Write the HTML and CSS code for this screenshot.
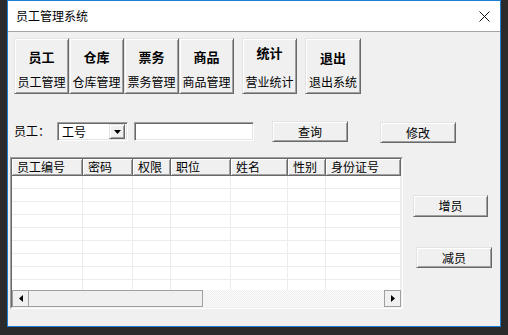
FILE: index.html
```html
<!DOCTYPE html>
<html lang="zh-CN">
<head>
<meta charset="utf-8">
<title>员工管理系统</title>
<link rel="stylesheet" href="styles.css">
</head>
<body>
<div class="window">
  <div class="titlebar">
    <span class="title">员工管理系统</span>
    <svg class="close" width="11" height="11" viewBox="0 0 11 11"><path d="M0.5 0.5L10.5 10.5M10.5 0.5L0.5 10.5" stroke="#111" stroke-width="1"/></svg>
  </div>
  <div class="client">
    <div class="toolbar">
      <div class="tgroup">
        <div class="tbtn"><div class="big">员工</div><div class="small">员工管理</div></div>
        <div class="tbtn"><div class="big">仓库</div><div class="small">仓库管理</div></div>
        <div class="tbtn"><div class="big">票务</div><div class="small">票务管理</div></div>
        <div class="tbtn"><div class="big">商品</div><div class="small">商品管理</div></div>
      </div>
      <div class="tbtn tbtn-stat"><div class="big">统计</div><div class="small">营业统计</div></div>
      <div class="tbtn tbtn-exit"><div class="big">退出</div><div class="small">退出系统</div></div>
    </div>

    <div class="search">
      <span class="label">员工：</span>
      <div class="combo">
        <span class="combo-text">工号</span>
        <span class="combo-btn"><svg width="7" height="4" viewBox="0 0 7 4"><path d="M0 0H7L3.5 4Z" fill="#000"/></svg></span>
      </div>
      <div class="textbox"></div>
      <div class="btn btn-query">查询</div>
      <div class="btn btn-edit">修改</div>
    </div>

    <div class="main">
      <div class="grid">
        <div class="grid-inner">
          <div class="head">
            <div class="hc c1">员工编号</div>
            <div class="hc c2">密码</div>
            <div class="hc c3">权限</div>
            <div class="hc c4">职位</div>
            <div class="hc c5">姓名</div>
            <div class="hc c6">性别</div>
            <div class="hc c7">身份证号</div>
          </div>
          <div class="rows">
            <div class="row"><div class="dc c1"></div><div class="dc c2"></div><div class="dc c3"></div><div class="dc c4"></div><div class="dc c5"></div><div class="dc c6"></div><div class="dc c7"></div></div>
            <div class="row"><div class="dc c1"></div><div class="dc c2"></div><div class="dc c3"></div><div class="dc c4"></div><div class="dc c5"></div><div class="dc c6"></div><div class="dc c7"></div></div>
            <div class="row"><div class="dc c1"></div><div class="dc c2"></div><div class="dc c3"></div><div class="dc c4"></div><div class="dc c5"></div><div class="dc c6"></div><div class="dc c7"></div></div>
            <div class="row"><div class="dc c1"></div><div class="dc c2"></div><div class="dc c3"></div><div class="dc c4"></div><div class="dc c5"></div><div class="dc c6"></div><div class="dc c7"></div></div>
            <div class="row"><div class="dc c1"></div><div class="dc c2"></div><div class="dc c3"></div><div class="dc c4"></div><div class="dc c5"></div><div class="dc c6"></div><div class="dc c7"></div></div>
            <div class="row"><div class="dc c1"></div><div class="dc c2"></div><div class="dc c3"></div><div class="dc c4"></div><div class="dc c5"></div><div class="dc c6"></div><div class="dc c7"></div></div>
            <div class="row"><div class="dc c1"></div><div class="dc c2"></div><div class="dc c3"></div><div class="dc c4"></div><div class="dc c5"></div><div class="dc c6"></div><div class="dc c7"></div></div>
            <div class="row"><div class="dc c1"></div><div class="dc c2"></div><div class="dc c3"></div><div class="dc c4"></div><div class="dc c5"></div><div class="dc c6"></div><div class="dc c7"></div></div>
            <div class="row"><div class="dc c1"></div><div class="dc c2"></div><div class="dc c3"></div><div class="dc c4"></div><div class="dc c5"></div><div class="dc c6"></div><div class="dc c7"></div></div>
          </div>
          <div class="hscroll">
            <div class="sbtn"><svg width="4" height="7" viewBox="0 0 4 7"><path d="M4 0V7L0 3.5Z" fill="#000"/></svg></div>
            <div class="thumb"></div>
            <div class="track"></div>
            <div class="sbtn"><svg width="4" height="7" viewBox="0 0 4 7"><path d="M0 0V7L4 3.5Z" fill="#000"/></svg></div>
          </div>
        </div>
      </div>
      <div class="side">
        <div class="btn btn-add">增员</div>
        <div class="btn btn-del">减员</div>
      </div>
    </div>
  </div>
</div>
</body>
</html>
```

FILE: styles.css
```css
* { box-sizing: border-box; }

html, body {
  margin: 0;
  padding: 0;
}

body {
  width: 508px;
  height: 335px;
  background: #2b2b2b;
  font-family: "Noto Sans CJK SC", "Noto Sans", sans-serif;
  font-size: 12px;
  color: #000;
  overflow: hidden;
}

.window {
  margin-left: 7px;
  width: 494px;
  height: 327px;
  border: 1px solid #1b7fd3;
  background: #f0f0f0;
  display: flex;
  flex-direction: column;
}

.titlebar {
  height: 31px;
  flex: none;
  background: #fff;
  border-bottom: 1px solid #a3a3a3;
  display: flex;
  align-items: center;
  justify-content: space-between;
  padding: 0 10px 0 8px;
}

.title {
  line-height: 16px;
  margin-top: -1px;
}

.close { display: block; }

.client {
  flex: 1;
  background: #f0f0f0;
  padding: 6px 0 0 0;
}

/* ---------- toolbar ---------- */
.toolbar {
  display: flex;
  padding-left: 6px;
  height: 56px;
}

.tgroup { display: flex; }

.tbtn {
  width: 55px;
  height: 56px;
  background: #f0f0f0;
  border: 1px solid;
  border-color: #e3e3e3 #696969 #696969 #e3e3e3;
  box-shadow: inset 1px 1px #fff, inset -1px -1px #a0a0a0;
  display: flex;
  flex-direction: column;
  align-items: center;
}

.tbtn .big {
  margin-top: 10px;
  height: 16px;
  line-height: 16px;
  font-size: 13px;
  font-weight: 700;
}

.tbtn .small {
  margin-top: 10px;
  line-height: 14px;
  font-size: 12px;
  white-space: nowrap;
}

.tbtn-stat { margin-left: 8px; }
.tbtn-stat .big { margin-top: 6px; }
.tbtn-stat .small { margin-top: 14px; }

.tbtn-exit { margin-left: 8px; width: 56px; }
.tbtn-exit .big { margin-top: 11px; }
.tbtn-exit .small { margin-top: 9px; }

/* ---------- search row ---------- */
.search {
  display: flex;
  align-items: flex-start;
  margin-top: 27px;
  padding-left: 6px;
  height: 22px;
}

.label {
  width: 43px;
  line-height: 20px;
}

.combo {
  margin-top: 1px;
  width: 71px;
  height: 19px;
  background: #fff;
  border: 1px solid;
  border-color: #a0a0a0 #fff #fff #a0a0a0;
  box-shadow: inset 1px 1px #696969, inset -1px -1px #e3e3e3;
  display: flex;
  align-items: center;
  justify-content: space-between;
  padding: 0 2px 0 4px;
}

.combo-text { line-height: 15px; }

.combo-btn {
  width: 16px;
  height: 15px;
  background: #f0f0f0;
  border: 1px solid;
  border-color: #e3e3e3 #696969 #696969 #e3e3e3;
  box-shadow: inset 1px 1px #fff, inset -1px -1px #a0a0a0;
  display: flex;
  align-items: center;
  justify-content: center;
}

.combo-btn svg { display: block; }

.textbox {
  margin-top: 1px;
  margin-left: 6px;
  width: 120px;
  height: 19px;
  background: #fff;
  border: 1px solid;
  border-color: #a0a0a0 #fff #fff #a0a0a0;
  box-shadow: inset 1px 1px #696969, inset -1px -1px #e3e3e3;
}

.btn {
  background: #f0f0f0;
  border: 1px solid;
  border-color: #e3e3e3 #696969 #696969 #e3e3e3;
  box-shadow: inset 1px 1px #fff, inset -1px -1px #a0a0a0;
  display: flex;
  align-items: center;
  justify-content: center;
  line-height: 14px;
}

.btn-query {
  margin-left: 18px;
  width: 76px;
  height: 21px;
}

.btn-edit {
  margin-left: 32px;
  margin-top: 1px;
  width: 76px;
  height: 21px;
}

/* ---------- main ---------- */
.main {
  display: flex;
  align-items: flex-start;
  margin-top: 14px;
  padding-left: 2px;
}

.grid {
  width: 393px;
  height: 152px;
  border: 1px solid;
  border-color: #a0a0a0 #fff #fff #a0a0a0;
  background: #fff;
}

.grid-inner {
  height: 100%;
  border: 1px solid;
  border-color: #696969 #f0f0f0 #f0f0f0 #696969;
  display: flex;
  flex-direction: column;
  overflow: hidden;
}

.head {
  display: flex;
  height: 17px;
  flex: none;
}

.hc {
  height: 17px;
  background: #f0f0f0;
  border-right: 1px solid #696969;
  border-bottom: 1px solid #696969;
  box-shadow: inset 1px 1px #fff, inset -1px -1px #a0a0a0;
  padding-left: 5px;
  line-height: 15px;
  white-space: nowrap;
  overflow: hidden;
}

.c1 { width: 71px; }
.c2 { width: 50px; }
.c3 { width: 38px; }
.c4 { width: 60px; }
.c5 { width: 57px; }
.c6 { width: 38px; }
.c7 { width: 75px; }

.rows {
  flex: 1;
  overflow: hidden;
  background: #fff;
}

.row {
  display: flex;
  height: 13px;
  border-bottom: 1px solid #ececec;
}

.dc {
  height: 12px;
  border-right: 1px solid #ececec;
}

.hscroll {
  flex: none;
  height: 17px;
  display: flex;
  background: #f0f0f0;
}

.sbtn {
  width: 17px;
  height: 17px;
  background: #f0f0f0;
  border: 1px solid #a0a0a0;
  display: flex;
  align-items: center;
  justify-content: center;
}

.sbtn svg { display: block; }

.thumb {
  width: 174px;
  height: 17px;
  background: #f0f0f0;
  border: 1px solid #a0a0a0;
  border-left: none;
}

.track {
  flex: 1;
  height: 17px;
  background: repeating-conic-gradient(#f0f0f0 0 25%, #fafafa 0 50%) 0 0 / 2px 2px;
}

/* ---------- side buttons ---------- */
.side {
  display: flex;
  flex-direction: column;
  align-items: flex-start;
}

.btn-add {
  margin-left: 10px;
  margin-top: 38px;
  width: 75px;
  height: 22px;
}

.btn-del {
  margin-left: 13px;
  margin-top: 30px;
  width: 76px;
  height: 21px;
}
```
